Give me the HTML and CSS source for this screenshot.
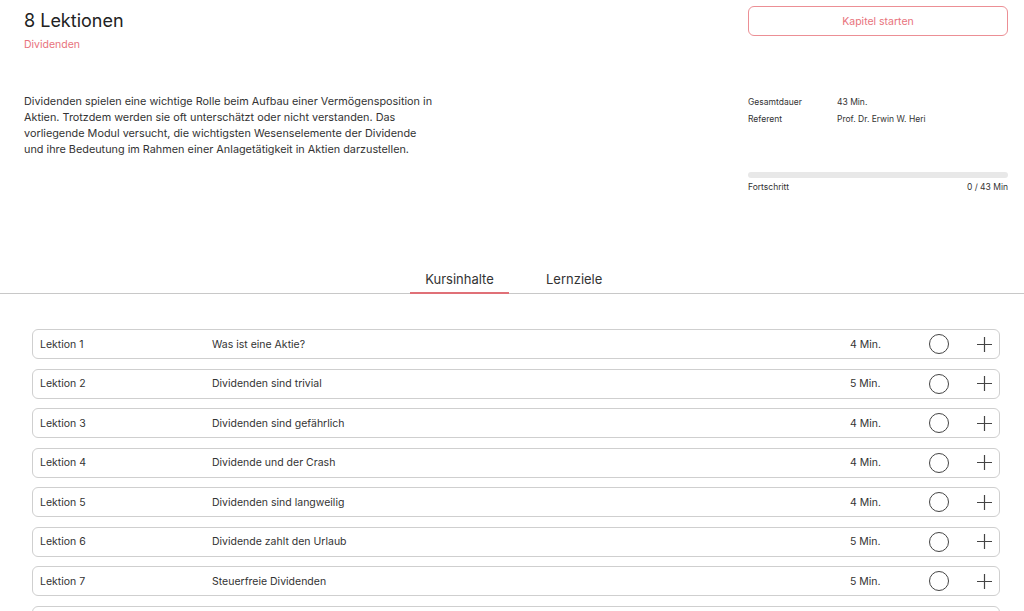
FILE: index.html
```html
<!DOCTYPE html>
<html lang="de">
<head>
    <meta charset="UTF-8">
    <meta name="viewport" content="width=device-width, initial-scale=1.0">
    <title>Dividenden</title>
    <link rel="stylesheet" href="styles.css">
</head>
<body>
    <div class="header">
        <div class="intro">
            <h1>8 Lektionen</h1>
            <div class="subtitle">Dividenden</div>
            <p class="description">Dividenden spielen eine wichtige Rolle beim Aufbau einer Vermögensposition in Aktien. Trotzdem werden sie oft unterschätzt oder nicht verstanden. Das vorliegende Modul versucht, die wichtigsten Wesenselemente der Dividende und ihre Bedeutung im Rahmen einer Anlagetätigkeit in Aktien darzustellen.</p>
        </div>
        <div class="side">
            <button class="start">Kapitel starten</button>
            <div class="meta">
                <span class="label">Gesamtdauer</span><span>43 Min.</span>
                <span class="label">Referent</span><span>Prof. Dr. Erwin W. Heri</span>
            </div>
            <div class="progress"><div class="bar"></div></div>
            <div class="progress-info">
                <span>Fortschritt</span>
                <span>0 / 43 Min</span>
            </div>
        </div>
    </div>

    <div class="tabs">
        <a class="tab active">Kursinhalte</a>
        <a class="tab">Lernziele</a>
    </div>

    <div class="lessons" id="lessons"></div>

    <script>
        const lessons = [
            ["Was ist eine Aktie?", 4],
            ["Dividenden sind trivial", 5],
            ["Dividenden sind gefährlich", 4],
            ["Dividende und der Crash", 4],
            ["Dividenden sind langweilig", 4],
            ["Dividende zahlt den Urlaub", 5],
            ["Steuerfreie Dividenden", 5],
            ["Dividenden und Zinsen", 4]
        ];
        const list = document.getElementById("lessons");
        lessons.forEach((l, i) => {
            const row = document.createElement("div");
            row.className = "lesson";
            row.innerHTML = `
                <span class="num">Lektion ${i + 1}</span>
                <span class="title">${l[0]}</span>
                <span class="dur">${l[1]} Min.</span>
                <span class="check"></span>
                <svg class="plus" width="15" height="15" viewBox="0 0 15 15"><path d="M7.5 0v15M0 7.5h15" stroke="#444" stroke-width="1.2" fill="none"/></svg>`;
            list.appendChild(row);
        });
    </script>
</body>
</html>
```

FILE: styles.css
```css
body {
  margin: 0;
  font-family: Inter, "Liberation Sans", sans-serif;
  color: #2a2a2a;
  background: #fff;
}

.header {
  display: flex;
  justify-content: space-between;
  padding: 6px 16px 0 24px;
  height: 248px;
}

.intro {
  width: 411px;
}

h1 {
  margin: 3px 0 0;
  font-size: 18px;
  font-weight: 400;
  line-height: 24px;
  color: #222;
}

.subtitle {
  margin-top: 5px;
  font-size: 10.5px;
  color: #e8737c;
}

.description {
  margin: 42px 0 0;
  font-size: 10.85px;
  line-height: 16px;
  color: #333;
}

.side {
  width: 260px;
}

.start {
  width: 100%;
  height: 30px;
  background: #fff;
  border: 1px solid #ec8f95;
  border-radius: 6px;
  color: #e8737c;
  font-family: inherit;
  font-size: 10.5px;
}

.meta {
  display: grid;
  grid-template-columns: 89px auto;
  row-gap: 5px;
  margin-top: 60px;
  font-size: 8.5px;
  line-height: 12px;
  color: #333;
}

.progress {
  margin-top: 47px;
  height: 6px;
  border-radius: 3px;
  background: #e8e8e8;
}

.bar {
  width: 0;
}

.progress-info {
  display: flex;
  justify-content: space-between;
  margin-top: 4px;
  font-size: 8.5px;
  color: #333;
}

.tabs {
  display: flex;
  justify-content: center;
  border-bottom: 1px solid #c8c8c8;
  padding-right: 8px;
}

.tab {
  font-size: 13px;
  color: #333;
  padding: 17px 0 5px;
  text-align: center;
}

.tab.active {
  width: 99px;
  border-bottom: 2px solid #e07077;
  margin-bottom: -1px;
}

.tab:not(.active) {
  margin-left: 37px;
  width: 60px;
  text-align: left;
}

.lessons {
  display: flex;
  flex-direction: column;
  gap: 9.5px;
  padding: 35px 24px 0 32px;
}

.lesson {
  display: flex;
  align-items: center;
  height: 30px;
  box-sizing: border-box;
  border: 1px solid #cfcfcf;
  border-radius: 6px;
  padding: 0 7px;
  font-size: 10.5px;
  color: #333;
}

.num {
  width: 172px;
}

.title {
  flex: 1;
}

.dur {
  width: 40px;
  margin-right: 39px;
}

.check {
  width: 18px;
  height: 18px;
  border: 1.2px solid #444;
  border-radius: 50%;
  margin-right: 28px;
}
```
